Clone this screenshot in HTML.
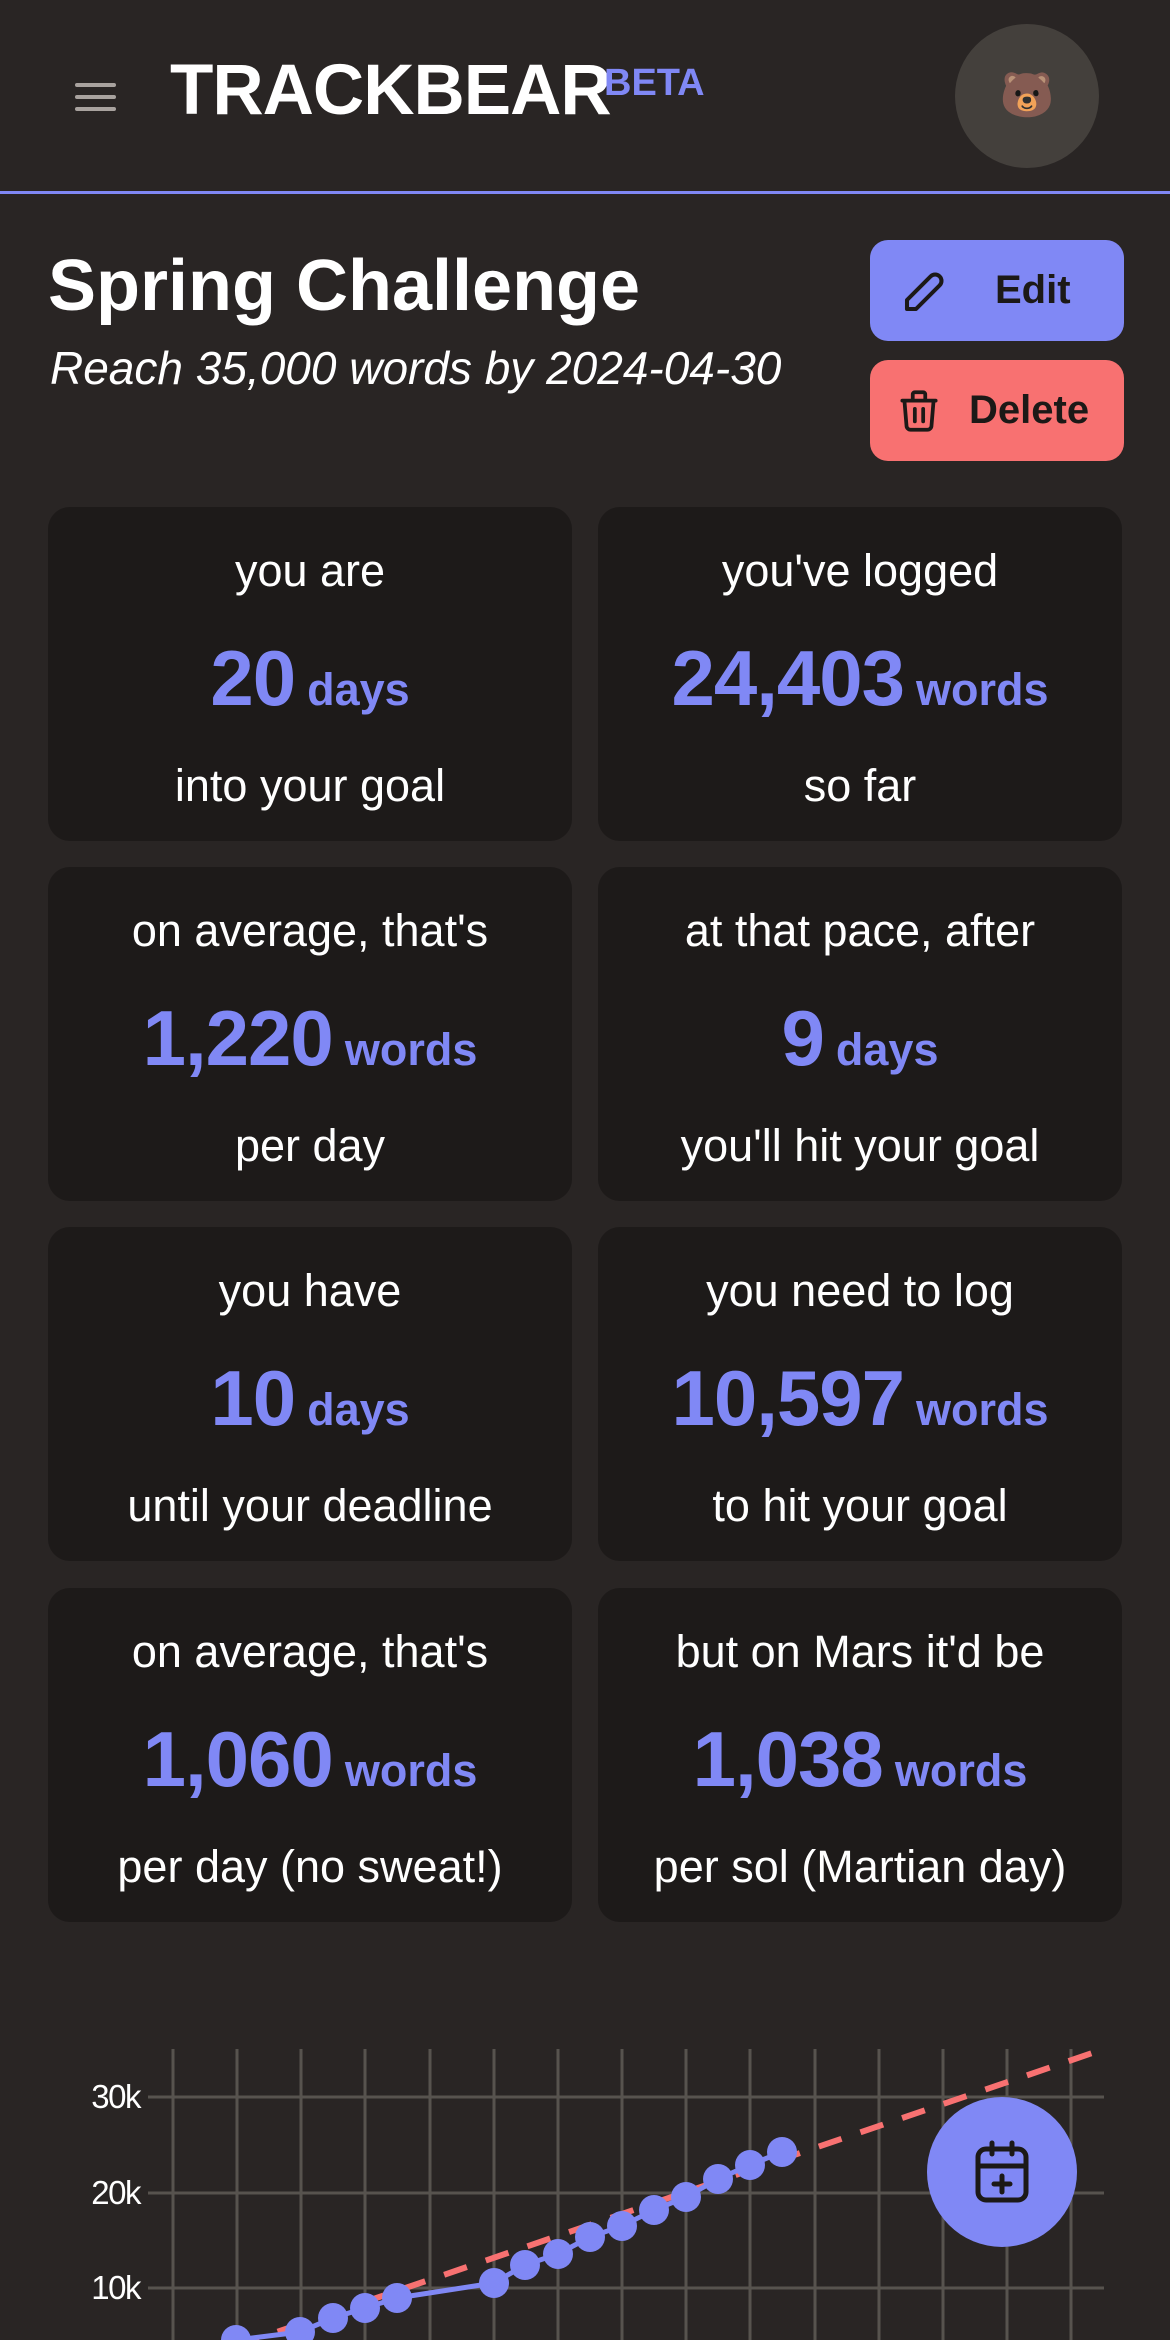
<!DOCTYPE html>
<html><head><meta charset="utf-8"><style>
*{margin:0;padding:0;box-sizing:border-box}
body{width:1170px;height:2340px;background:#292524;overflow:hidden;position:relative;font-family:"Liberation Sans",sans-serif;color:#fff}
.abs{position:absolute}
.card{position:absolute;width:524px;height:334px;background:#1d1a19;border-radius:22px;text-align:center}
.t1,.t3{position:absolute;left:0;right:0;font-size:45px;font-weight:300;line-height:1}
.num{position:absolute;left:0;right:0;color:#8088f5;font-weight:700;line-height:1}
.num b{font-size:78px;letter-spacing:-1px}
.num span{font-size:45px;margin-left:12px}
</style></head><body>
<!-- header -->
<div class="abs" style="left:75px;top:83px;width:41px;height:4px;background:#a8a29e;border-radius:2px"></div>
<div class="abs" style="left:75px;top:95px;width:41px;height:4px;background:#a8a29e;border-radius:2px"></div>
<div class="abs" style="left:75px;top:107px;width:41px;height:4px;background:#a8a29e;border-radius:2px"></div>
<div class="abs" style="left:170px;top:55px;font-size:71px;font-weight:700;line-height:1;letter-spacing:-1px">TRACKBEAR</div>
<div class="abs" style="left:604px;top:64px;font-size:38px;font-weight:700;color:#8088f5;line-height:1">BETA</div>
<div class="abs" style="left:955px;top:24px;width:144px;height:144px;border-radius:50%;background:#44403c;text-align:center;line-height:144px;font-size:44px">🐻</div>
<div class="abs" style="left:0;top:191px;width:1170px;height:3px;background:#8088f5"></div>
<!-- title -->
<div class="abs" style="left:48px;top:250px;font-size:72px;font-weight:700;line-height:1">Spring Challenge</div>
<div class="abs" style="left:50px;top:345px;font-size:46px;font-style:italic;font-weight:300;line-height:1">Reach 35,000 words by 2024-04-30</div>
<div class="abs" style="left:870px;top:240px;width:254px;height:101px;background:#8088f5;border-radius:18px;color:#1c1917">
<svg class="abs" style="left:28px;top:24px" width="54" height="54" viewBox="0 0 24 24" fill="none" stroke="#1c1917" stroke-width="1.8" stroke-linecap="round" stroke-linejoin="round"><path d="M4 20h4L18.5 9.5a2.8 2.8 0 0 0-4-4L4 16v4"/></svg>
<div class="abs" style="left:125px;top:30px;font-size:40px;font-weight:700;line-height:1">Edit</div></div>
<div class="abs" style="left:870px;top:360px;width:254px;height:101px;background:#f87171;border-radius:18px;color:#1c1917">
<svg class="abs" style="left:24px;top:26px" width="50" height="50" viewBox="0 0 24 24" fill="none" stroke="#1c1917" stroke-width="1.8" stroke-linecap="round" stroke-linejoin="round"><path d="M4 7h16M10 11v6M14 11v6M5 7l1 12a2 2 0 0 0 2 2h8a2 2 0 0 0 2-2l1-12M9 7V4a1 1 0 0 1 1-1h4a1 1 0 0 1 1 1v3"/></svg>
<div class="abs" style="left:99px;top:30px;font-size:40px;font-weight:700;line-height:1">Delete</div></div>
<!-- cards -->
<div class="card" style="left:48px;top:507px"><div class="t1" style="top:41px">you are</div><div class="num" style="top:132px"><b>20</b><span>days</span></div><div class="t3" style="top:256px">into your goal</div></div>
<div class="card" style="left:598px;top:507px"><div class="t1" style="top:41px">you've logged</div><div class="num" style="top:132px"><b>24,403</b><span>words</span></div><div class="t3" style="top:256px">so far</div></div>
<div class="card" style="left:48px;top:867px"><div class="t1" style="top:41px">on average, that's</div><div class="num" style="top:132px"><b>1,220</b><span>words</span></div><div class="t3" style="top:256px">per day</div></div>
<div class="card" style="left:598px;top:867px"><div class="t1" style="top:41px">at that pace, after</div><div class="num" style="top:132px"><b>9</b><span>days</span></div><div class="t3" style="top:256px">you'll hit your goal</div></div>
<div class="card" style="left:48px;top:1227px"><div class="t1" style="top:41px">you have</div><div class="num" style="top:132px"><b>10</b><span>days</span></div><div class="t3" style="top:256px">until your deadline</div></div>
<div class="card" style="left:598px;top:1227px"><div class="t1" style="top:41px">you need to log</div><div class="num" style="top:132px"><b>10,597</b><span>words</span></div><div class="t3" style="top:256px">to hit your goal</div></div>
<div class="card" style="left:48px;top:1588px"><div class="t1" style="top:41px">on average, that's</div><div class="num" style="top:132px"><b>1,060</b><span>words</span></div><div class="t3" style="top:256px">per day (no sweat!)</div></div>
<div class="card" style="left:598px;top:1588px"><div class="t1" style="top:41px">but on Mars it'd be</div><div class="num" style="top:132px"><b>1,038</b><span>words</span></div><div class="t3" style="top:256px">per sol (Martian day)</div></div>
<!-- chart -->
<svg class="abs" style="left:0;top:0" width="1170" height="2340">
<g stroke="#57534e" stroke-width="3">
<line x1="173" y1="2049" x2="173" y2="2340"/><line x1="237" y1="2049" x2="237" y2="2340"/><line x1="301" y1="2049" x2="301" y2="2340"/><line x1="365" y1="2049" x2="365" y2="2340"/><line x1="430" y1="2049" x2="430" y2="2340"/><line x1="494" y1="2049" x2="494" y2="2340"/><line x1="558" y1="2049" x2="558" y2="2340"/><line x1="622" y1="2049" x2="622" y2="2340"/><line x1="686" y1="2049" x2="686" y2="2340"/><line x1="750" y1="2049" x2="750" y2="2340"/><line x1="815" y1="2049" x2="815" y2="2340"/><line x1="879" y1="2049" x2="879" y2="2340"/><line x1="943" y1="2049" x2="943" y2="2340"/><line x1="1007" y1="2049" x2="1007" y2="2340"/><line x1="1071" y1="2049" x2="1071" y2="2340"/>
<line x1="148" y1="2097" x2="1104" y2="2097"/><line x1="148" y1="2193" x2="1104" y2="2193"/><line x1="148" y1="2288" x2="1104" y2="2288"/>
</g>
<g fill="#fff" font-family="Liberation Sans" font-size="33" text-anchor="end" letter-spacing="-1.5"><text x="140" y="2108">30k</text><text x="140" y="2204">20k</text><text x="140" y="2299">10k</text></g>
<line x1="236" y1="2346" x2="1104" y2="2049" stroke="#f87171" stroke-width="6" stroke-dasharray="24 20"/>
<polyline fill="none" stroke="#8088f5" stroke-width="5" points="236,2340 300,2332 333,2318 365,2308 397,2298 494,2283 525,2265 558,2254 590,2237 622,2226 654,2210 686,2197 718,2179 750,2165 782,2152"/>
<g fill="#8088f5"><circle cx="236" cy="2340" r="15"/><circle cx="300" cy="2332" r="15"/><circle cx="333" cy="2318" r="15"/><circle cx="365" cy="2308" r="15"/><circle cx="397" cy="2298" r="15"/><circle cx="494" cy="2283" r="15"/><circle cx="525" cy="2265" r="15"/><circle cx="558" cy="2254" r="15"/><circle cx="590" cy="2237" r="15"/><circle cx="622" cy="2226" r="15"/><circle cx="654" cy="2210" r="15"/><circle cx="686" cy="2197" r="15"/><circle cx="718" cy="2179" r="15"/><circle cx="750" cy="2165" r="15"/><circle cx="782" cy="2152" r="15"/></g>
<circle cx="1002" cy="2172" r="75" fill="#8088f5"/>
<g fill="none" stroke="#1c1917" stroke-width="5" stroke-linecap="round" stroke-linejoin="round">
<rect x="978" y="2149" width="48" height="51" rx="8"/><line x1="992" y1="2143" x2="992" y2="2154"/><line x1="1012" y1="2143" x2="1012" y2="2154"/><line x1="978" y1="2166" x2="1026" y2="2166"/><line x1="994" y1="2184" x2="1010" y2="2184"/><line x1="1002" y1="2176" x2="1002" y2="2192"/>
</g>
</svg>
</body></html>
